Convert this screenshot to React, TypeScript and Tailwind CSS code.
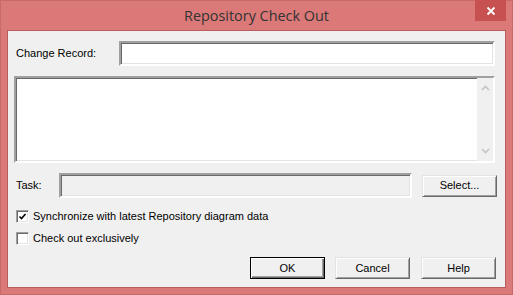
import React from "react";

const sunken = "border-2 border-t-[#a0a0a0] border-l-[#a0a0a0] border-b-[#ffffff] border-r-[#ffffff] shadow-[inset_1px_1px_0_#696969,inset_-1px_-1px_0_#e3e3e3]";

function Btn({ label, def }: { label: string; def?: boolean }) {
  return (
    <div
      className={
        "w-[75px] h-[22px] flex items-center justify-center bg-[#f0f0f0] text-[11px] text-black " +
        (def
          ? "border border-[#000000] shadow-[inset_1px_1px_0_#ffffff,inset_-1px_-1px_0_#696969,inset_-2px_-2px_0_#a0a0a0]"
          : "border border-t-[#e3e3e3] border-l-[#e3e3e3] border-b-[#696969] border-r-[#696969] shadow-[inset_1px_1px_0_#ffffff,inset_-1px_-1px_0_#a0a0a0]")
      }
    >
      {label}
    </div>
  );
}

function Check({ checked }: { checked?: boolean }) {
  return (
    <div className="w-[13px] h-[13px] bg-white border border-t-[#a0a0a0] border-l-[#a0a0a0] border-b-[#ffffff] border-r-[#ffffff] shadow-[inset_1px_1px_0_#696969,inset_-1px_-1px_0_#e3e3e3] flex items-center justify-center">
      {checked && (
        <svg width="9" height="9" viewBox="0 0 9 9">
          <path d="M1.5 4.5 L3.5 6.5 L7.5 2" stroke="#000" strokeWidth="1.6" fill="none" />
        </svg>
      )}
    </div>
  );
}

export default function App() {
  return (
    <div
      className="w-[513px] h-[295px] bg-[#db7878] border border-[#c86a6a] flex flex-col"
      style={{ fontFamily: '"Liberation Sans", Arial, sans-serif' }}
    >
      {/* title bar */}
      <div className="relative h-[29px] flex items-center justify-center shrink-0">
        <span className="text-[14.4px] text-[#333333]" style={{ fontFamily: '"Open Sans", "Noto Sans", sans-serif' }}>
          Repository Check Out
        </span>
        <div className="absolute right-[6px] top-[-1px] w-[31px] h-[21px] bg-[#c75050] flex items-center justify-center">
          <svg width="10" height="10" viewBox="0 0 10 10">
            <path d="M1.5 1.5 L8.5 8.5 M8.5 1.5 L1.5 8.5" stroke="#ffffff" strokeWidth="1.8" />
          </svg>
        </div>
      </div>
      {/* client area */}
      <div className="ml-[6px] w-[499px] h-[258px] border border-[#b85c5c] bg-[#f0f0f0] text-[11px] text-black flex flex-col">
        <div className="flex items-center mt-[10px] h-[25px]">
          <span className="ml-[8px] w-[103px]">Change Record:</span>
          <div className={"w-[376px] h-[25px] bg-white " + sunken} />
        </div>
        <div className={"ml-[6px] mt-[10px] w-[481px] h-[87px] bg-white flex justify-end " + sunken}>
          <div className="w-[16px] h-full bg-[#f0f0f0] flex flex-col items-center justify-between py-[7px]">
            <svg width="9" height="6" viewBox="0 0 9 6">
              <path d="M1 5 L4.5 1.5 L8 5" stroke="#c4c4c4" strokeWidth="1.6" fill="none" />
            </svg>
            <svg width="9" height="6" viewBox="0 0 9 6">
              <path d="M1 1 L4.5 4.5 L8 1" stroke="#c4c4c4" strokeWidth="1.6" fill="none" />
            </svg>
          </div>
        </div>
        <div className="flex items-center mt-[10px] h-[25px]">
          <span className="ml-[8px] w-[43px]">Task:</span>
          <div className={"w-[353px] h-[25px] bg-[#f0f0f0] " + sunken} />
          <div className="ml-[10px]">
            <Btn label="Select..." />
          </div>
        </div>
        <div className="flex items-center mt-[12px] ml-[8px] h-[13px]">
          <Check checked />
          <span className="ml-[4px]">Synchronize with latest Repository diagram data</span>
        </div>
        <div className="flex items-center mt-[9px] ml-[8px] h-[13px]">
          <Check />
          <span className="ml-[4px]">Check out exclusively</span>
        </div>
        <div className="flex mt-[12px] ml-[242px] gap-[10px]">
          <Btn label="OK" def />
          <Btn label="Cancel" />
          <div className="ml-[1px]">
            <Btn label="Help" />
          </div>
        </div>
      </div>
    </div>
  );
}
